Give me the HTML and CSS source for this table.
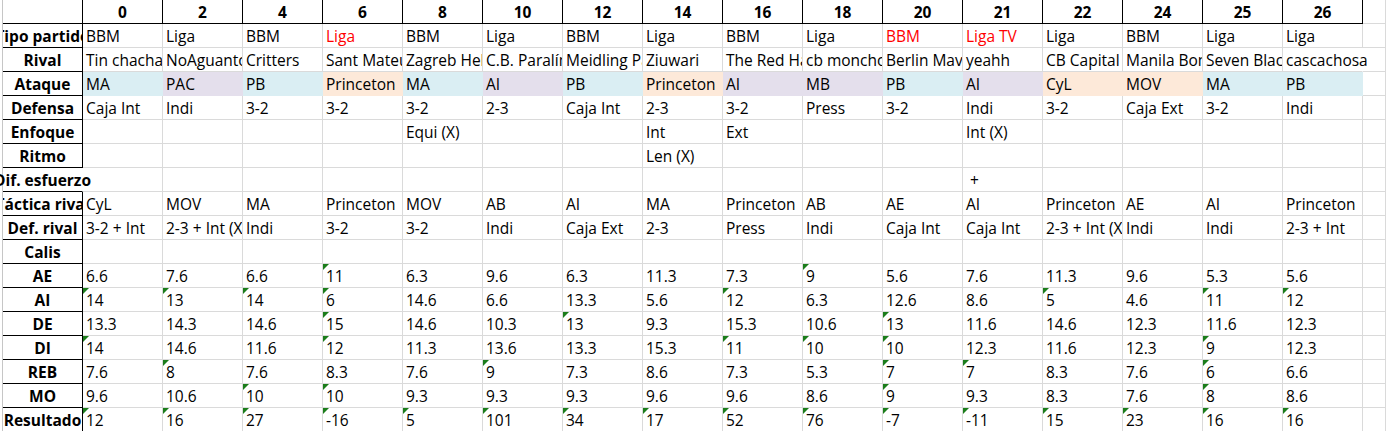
FILE: index.html
```html
<!DOCTYPE html>
<html lang="es">
<head>
<meta charset="utf-8">
<title>Partidos</title>
<link rel="stylesheet" href="styles.css">
</head>
<body>
<div class="sheet">
  <!-- header -->
  <div class="c h"></div><div class="c h">0</div><div class="c h">2</div><div class="c h">4</div><div class="c h">6</div><div class="c h">8</div><div class="c h">10</div><div class="c h">12</div><div class="c h">14</div><div class="c h">16</div><div class="c h">18</div><div class="c h">20</div><div class="c h">21</div><div class="c h">22</div><div class="c h">24</div><div class="c h">25</div><div class="c h">26</div><div class="c"></div>
  <!-- Tipo partido -->
  <div class="c l">Tipo partido</div><div class="c">BBM</div><div class="c">Liga</div><div class="c">BBM</div><div class="c red">Liga</div><div class="c">BBM</div><div class="c">Liga</div><div class="c">BBM</div><div class="c">Liga</div><div class="c">BBM</div><div class="c">Liga</div><div class="c red">BBM</div><div class="c red">Liga TV</div><div class="c">Liga</div><div class="c">BBM</div><div class="c">Liga</div><div class="c">Liga</div><div class="c"></div>
  <!-- Rival -->
  <div class="c l">Rival</div><div class="c">Tin chacha</div><div class="c">NoAguantos</div><div class="c">Critters</div><div class="c">Sant Mateu</div><div class="c">Zagreb Hellcats</div><div class="c">C.B. Paralímpico</div><div class="c">Meidling Panthers</div><div class="c">Ziuwari</div><div class="c">The Red Hawks</div><div class="c">cb monchos</div><div class="c">Berlin Mavericks</div><div class="c">yeahh</div><div class="c">CB Capital BC</div><div class="c">Manila Bombers</div><div class="c">Seven Blackhawks</div><div class="c ov">cascachosa</div><div class="c"></div>
  <!-- Ataque -->
  <div class="c l">Ataque</div><div class="c bl">MA</div><div class="c lv">PAC</div><div class="c bl">PB</div><div class="c pc">Princeton</div><div class="c bl">MA</div><div class="c lv">AI</div><div class="c bl">PB</div><div class="c pc">Princeton</div><div class="c lv">AI</div><div class="c lv">MB</div><div class="c bl">PB</div><div class="c lv">AI</div><div class="c pc">CyL</div><div class="c pc">MOV</div><div class="c bl">MA</div><div class="c bl">PB</div><div class="c"></div>
  <!-- Defensa -->
  <div class="c l">Defensa</div><div class="c">Caja Int</div><div class="c">Indi</div><div class="c">3-2</div><div class="c">3-2</div><div class="c">3-2</div><div class="c">2-3</div><div class="c">Caja Int</div><div class="c">2-3</div><div class="c">3-2</div><div class="c">Press</div><div class="c">3-2</div><div class="c">Indi</div><div class="c">3-2</div><div class="c">Caja Ext</div><div class="c">3-2</div><div class="c">Indi</div><div class="c"></div>
  <!-- Enfoque -->
  <div class="c l">Enfoque</div><div class="c"></div><div class="c"></div><div class="c"></div><div class="c"></div><div class="c">Equi (X)</div><div class="c"></div><div class="c"></div><div class="c">Int</div><div class="c">Ext</div><div class="c"></div><div class="c"></div><div class="c">Int (X)</div><div class="c"></div><div class="c"></div><div class="c"></div><div class="c"></div><div class="c"></div>
  <!-- Ritmo -->
  <div class="c l">Ritmo</div><div class="c"></div><div class="c"></div><div class="c"></div><div class="c"></div><div class="c"></div><div class="c"></div><div class="c"></div><div class="c">Len (X)</div><div class="c"></div><div class="c"></div><div class="c"></div><div class="c"></div><div class="c"></div><div class="c"></div><div class="c"></div><div class="c"></div><div class="c"></div>
  <!-- Dif. esfuerzo -->
  <div class="c l ov">Dif. esfuerzo</div><div class="c"></div><div class="c"></div><div class="c"></div><div class="c"></div><div class="c"></div><div class="c"></div><div class="c"></div><div class="c"></div><div class="c"></div><div class="c"></div><div class="c"></div><div class="c">&nbsp;+</div><div class="c"></div><div class="c"></div><div class="c"></div><div class="c"></div><div class="c"></div>
  <!-- Táctica rival -->
  <div class="c l">Táctica rival</div><div class="c">CyL</div><div class="c">MOV</div><div class="c">MA</div><div class="c">Princeton</div><div class="c">MOV</div><div class="c">AB</div><div class="c">AI</div><div class="c">MA</div><div class="c">Princeton</div><div class="c">AB</div><div class="c">AE</div><div class="c">AI</div><div class="c">Princeton</div><div class="c">AE</div><div class="c">AI</div><div class="c">Princeton</div><div class="c"></div>
  <!-- Def. rival -->
  <div class="c l">Def. rival</div><div class="c">3-2 + Int</div><div class="c">2-3 + Int (X)</div><div class="c">Indi</div><div class="c">3-2</div><div class="c">3-2</div><div class="c">Indi</div><div class="c">Caja Ext</div><div class="c">2-3</div><div class="c">Press</div><div class="c">Indi</div><div class="c">Caja Int</div><div class="c">Caja Int</div><div class="c">2-3 + Int (X)</div><div class="c">Indi</div><div class="c">Indi</div><div class="c">2-3 + Int</div><div class="c"></div>
  <!-- Calis -->
  <div class="c l">Calis</div><div class="c"></div><div class="c"></div><div class="c"></div><div class="c"></div><div class="c"></div><div class="c"></div><div class="c"></div><div class="c"></div><div class="c"></div><div class="c"></div><div class="c"></div><div class="c"></div><div class="c"></div><div class="c"></div><div class="c"></div><div class="c"></div><div class="c"></div>
  <!-- AE -->
  <div class="c l">AE</div><div class="c">6.6</div><div class="c">7.6</div><div class="c">6.6</div><div class="c t">11</div><div class="c">6.3</div><div class="c">9.6</div><div class="c">6.3</div><div class="c">11.3</div><div class="c">7.3</div><div class="c t">9</div><div class="c">5.6</div><div class="c">7.6</div><div class="c">11.3</div><div class="c">9.6</div><div class="c">5.3</div><div class="c">5.6</div><div class="c"></div>
  <!-- AI -->
  <div class="c l">AI</div><div class="c t">14</div><div class="c t">13</div><div class="c t">14</div><div class="c t">6</div><div class="c">14.6</div><div class="c">6.6</div><div class="c">13.3</div><div class="c">5.6</div><div class="c t">12</div><div class="c">6.3</div><div class="c">12.6</div><div class="c">8.6</div><div class="c t">5</div><div class="c">4.6</div><div class="c t">11</div><div class="c t">12</div><div class="c"></div>
  <!-- DE -->
  <div class="c l">DE</div><div class="c">13.3</div><div class="c">14.3</div><div class="c">14.6</div><div class="c t">15</div><div class="c">14.6</div><div class="c">10.3</div><div class="c t">13</div><div class="c">9.3</div><div class="c">15.3</div><div class="c">10.6</div><div class="c t">13</div><div class="c">11.6</div><div class="c">14.6</div><div class="c">12.3</div><div class="c">11.6</div><div class="c">12.3</div><div class="c"></div>
  <!-- DI -->
  <div class="c l">DI</div><div class="c t">14</div><div class="c">14.6</div><div class="c">11.6</div><div class="c t">12</div><div class="c">11.3</div><div class="c">13.6</div><div class="c">13.3</div><div class="c">15.3</div><div class="c t">11</div><div class="c t">10</div><div class="c t">10</div><div class="c">12.3</div><div class="c">11.6</div><div class="c">12.3</div><div class="c t">9</div><div class="c">12.3</div><div class="c"></div>
  <!-- REB -->
  <div class="c l">REB</div><div class="c">7.6</div><div class="c t">8</div><div class="c">7.6</div><div class="c">8.3</div><div class="c">7.6</div><div class="c t">9</div><div class="c">7.3</div><div class="c">8.6</div><div class="c">7.3</div><div class="c">5.3</div><div class="c t">7</div><div class="c t">7</div><div class="c">8.3</div><div class="c">7.6</div><div class="c t">6</div><div class="c">6.6</div><div class="c"></div>
  <!-- MO -->
  <div class="c l">MO</div><div class="c">9.6</div><div class="c">10.6</div><div class="c t">10</div><div class="c t">10</div><div class="c">9.3</div><div class="c">9.3</div><div class="c">9.3</div><div class="c">9.6</div><div class="c">9.6</div><div class="c">8.6</div><div class="c t">9</div><div class="c">9.3</div><div class="c">8.3</div><div class="c">7.6</div><div class="c t">8</div><div class="c">8.6</div><div class="c"></div>
  <!-- Resultado -->
  <div class="c l">Resultado</div><div class="c t">12</div><div class="c t">16</div><div class="c t">27</div><div class="c t">-16</div><div class="c t">5</div><div class="c t">101</div><div class="c t">34</div><div class="c t">17</div><div class="c t">52</div><div class="c t">76</div><div class="c t">-7</div><div class="c t">-11</div><div class="c t">15</div><div class="c t">23</div><div class="c t">16</div><div class="c t">16</div><div class="c"></div>
</div>
</body>
</html>
```

FILE: styles.css
```css
html, body {
  margin: 0;
  padding: 0;
  overflow: hidden;
  background: #ffffff;
}

body {
  font-family: "Open Sans", "Noto Sans", sans-serif;
  font-size: 15.5px;
  color: #000000;
}

.sheet {
  display: grid;
  grid-template-columns: repeat(17, 80px) 1fr;
  grid-auto-rows: 24px;
  margin-left: 2px;
  border-left: 1px solid #c6c6c6;
}

.c {
  position: relative;
  border-right: 1px solid #dadada;
  border-bottom: 1px solid #dadada;
  overflow: clip;
  white-space: nowrap;
  padding: 1px 3px 0;
  line-height: 22px;
}

.h {
  font-weight: 700;
  text-align: center;
  border-color: #000000;
}

.l {
  font-weight: 700;
  display: flex;
  justify-content: center;
  padding: 1px 0 0;
  border-color: #000000;
}

.ov {
  overflow: visible;
  border-right-color: transparent;
}

.red {
  color: #ff0000;
}

.bl {
  background: #daeef3;
  border-color: #daeef3;
}

.lv {
  background: #e4dfec;
  border-color: #e4dfec;
}

.pc {
  background: #fde9d9;
  border-color: #fde9d9;
}

.t::before {
  content: "";
  position: absolute;
  left: 0;
  top: 0;
  width: 6px;
  height: 6px;
  background: #1b7d1b;
  clip-path: polygon(0 0, 100% 0, 0 100%);
}
```
